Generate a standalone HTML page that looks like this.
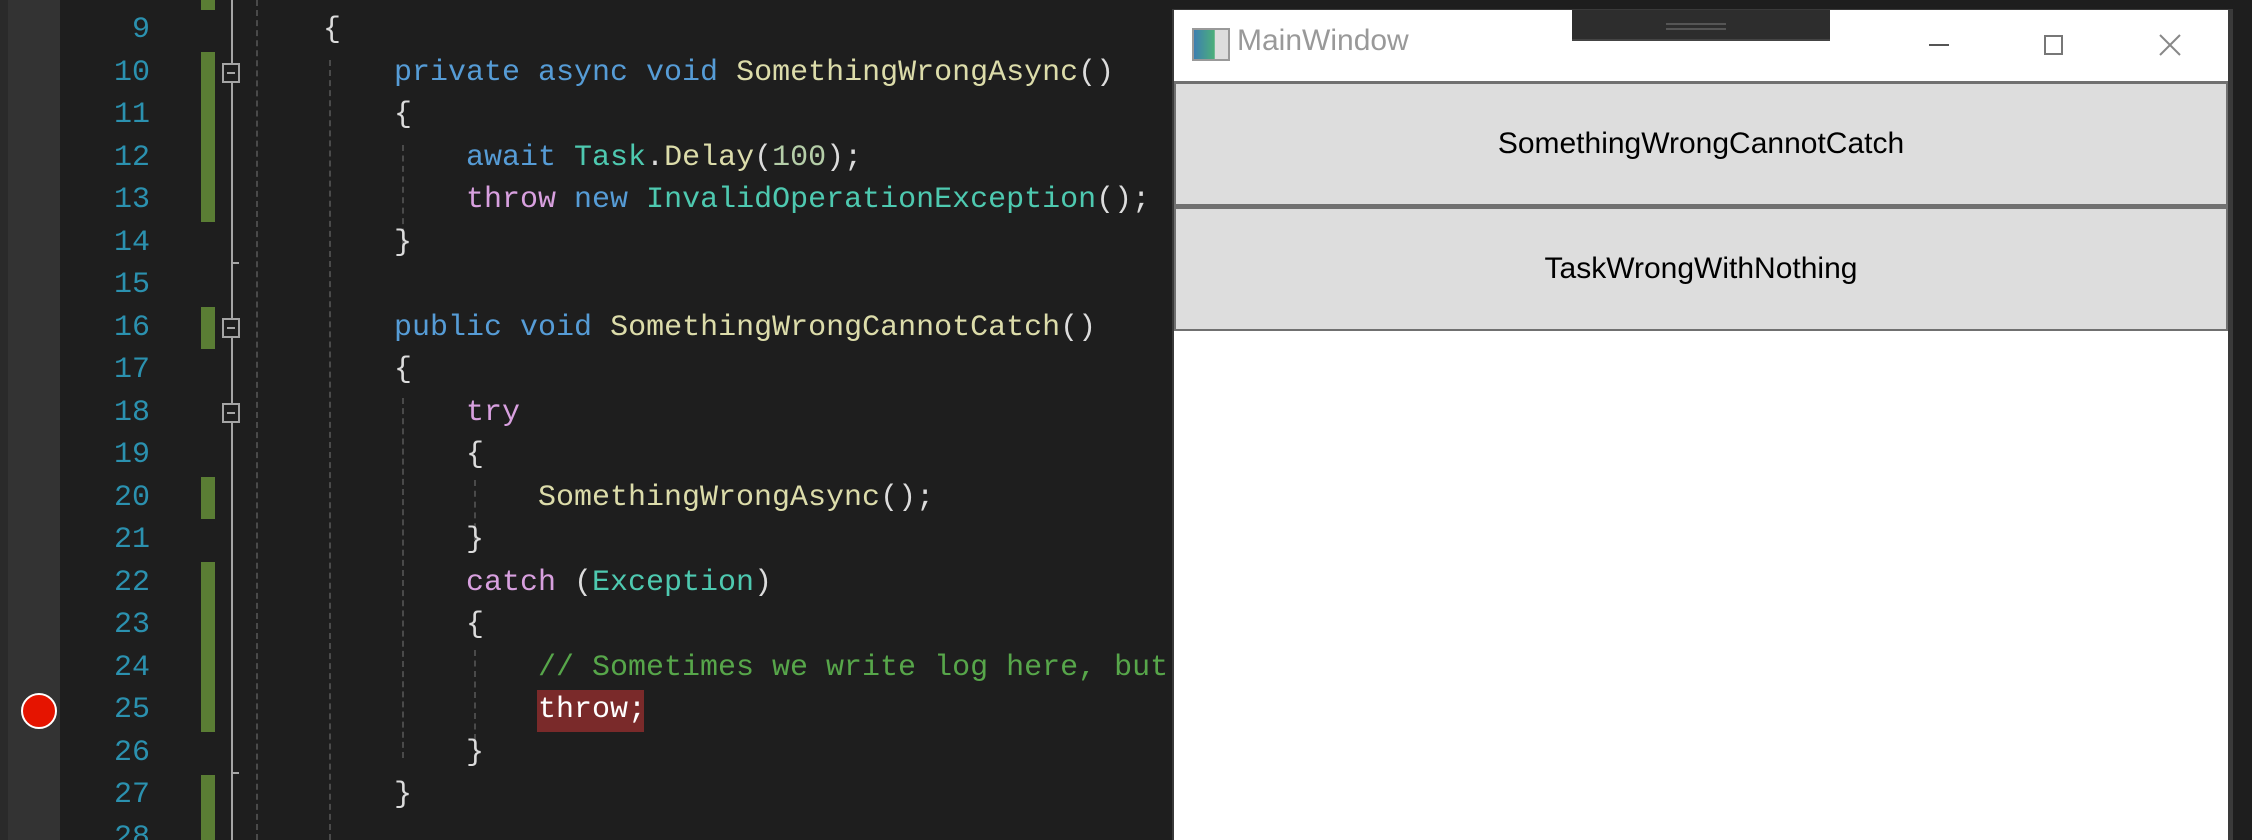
<!DOCTYPE html>
<html style="overflow:hidden;width:2252px;height:840px"><head><meta charset="utf-8"><style>
*{margin:0;padding:0;box-sizing:border-box}
body{width:2252px;height:840px;background:#1e1e1e;position:relative;overflow:hidden;font-family:"Liberation Mono",monospace}
.l{position:absolute;left:0;height:42px;line-height:42px;font-size:30px;white-space:pre;color:#dcdcdc}
.n{position:absolute;width:150px;text-align:right;color:#2b91af;font-size:30px;height:42px;line-height:42px;left:0}
.k{color:#569cd6}.c{color:#d8a0df}.m{color:#dcdcaa}.t{color:#4ec9b0}.nu{color:#b5cea8}.cm{color:#57a64a}
.g{position:absolute;left:201px;width:14px;background:#5a7d34}
.f{position:absolute;left:222px;width:18px;height:20px;border:2px solid #a5a5a5;background:#1e1e1e}
.f:after{content:"";position:absolute;left:3px;top:7px;width:8px;height:2px;background:#a5a5a5}
.d{position:absolute;top:0;height:840px;width:0;border-left:2px dashed #4a4a4a}
</style></head><body>
<div style="position:absolute;left:0;top:0;width:8px;height:840px;background:#2a2a2a"></div>
<div style="position:absolute;left:8px;top:0;width:52px;height:840px;background:#333"></div>
<div style="position:absolute;left:231px;top:0;width:2px;height:840px;background:#a5a5a5"></div>
<div style="position:absolute;left:231px;top:262px;width:8px;height:2px;background:#a5a5a5"></div>
<div style="position:absolute;left:231px;top:772px;width:8px;height:2px;background:#a5a5a5"></div>
<div class="d" style="left:256px"></div>
<div class="d" style="left:329px;top:60px;height:780px"></div>
<div class="d" style="left:402px;top:145px;height:100px"></div>
<div class="d" style="left:402px;top:398px;height:360px"></div>
<div class="d" style="left:474px;top:480px;height:60px"></div>
<div class="d" style="left:474px;top:650px;height:90px"></div>
<div class="g" style="top:0;height:10px"></div>
<div class="g" style="top:52px;height:170px"></div>
<div class="g" style="top:307px;height:42px"></div>
<div class="g" style="top:477px;height:42px"></div>
<div class="g" style="top:562px;height:170px"></div>
<div class="g" style="top:775px;height:65px"></div>
<div class="f" style="top:63px"></div>
<div class="f" style="top:318px"></div>
<div class="f" style="top:403px"></div>
<div style="position:absolute;left:21px;top:693px;width:36px;height:36px;border-radius:50%;background:#e51400;border:2px solid #fff"></div>
<div style="position:absolute;left:537px;top:690px;width:107px;height:42px;background:#7a2a2a"></div>
<div class="l" style="top:-34px;left:323px"><span class="k">public</span> <span class="t">SyncExample</span></div>
<div class="n" style="top:9px">9</div><div class="l" style="top:9px;left:323px">{</div>
<div class="n" style="top:52px">10</div><div class="l" style="top:52px;left:394px"><span class="k">private async void</span> <span class="m">SomethingWrongAsync</span>()</div>
<div class="n" style="top:94px">11</div><div class="l" style="top:94px;left:394px">{</div>
<div class="n" style="top:137px">12</div><div class="l" style="top:137px;left:466px"><span class="k">await</span> <span class="t">Task</span>.<span class="m">Delay</span>(<span class="nu">100</span>);</div>
<div class="n" style="top:179px">13</div><div class="l" style="top:179px;left:466px"><span class="c">throw</span> <span class="k">new</span> <span class="t">InvalidOperationException</span>();</div>
<div class="n" style="top:222px">14</div><div class="l" style="top:222px;left:394px">}</div>
<div class="n" style="top:264px">15</div>
<div class="n" style="top:307px">16</div><div class="l" style="top:307px;left:394px"><span class="k">public void</span> <span class="m">SomethingWrongCannotCatch</span>()</div>
<div class="n" style="top:349px">17</div><div class="l" style="top:349px;left:394px">{</div>
<div class="n" style="top:392px">18</div><div class="l" style="top:392px;left:466px"><span class="c">try</span></div>
<div class="n" style="top:434px">19</div><div class="l" style="top:434px;left:466px">{</div>
<div class="n" style="top:477px">20</div><div class="l" style="top:477px;left:538px"><span class="m">SomethingWrongAsync</span>();</div>
<div class="n" style="top:519px">21</div><div class="l" style="top:519px;left:466px">}</div>
<div class="n" style="top:562px">22</div><div class="l" style="top:562px;left:466px"><span class="c">catch</span> (<span class="t">Exception</span>)</div>
<div class="n" style="top:604px">23</div><div class="l" style="top:604px;left:466px">{</div>
<div class="n" style="top:647px">24</div><div class="l cm" style="top:647px;left:538px">// Sometimes we write log here, but</div>
<div class="n" style="top:689px">25</div><div class="l" style="top:689px;left:538px;color:#fff">throw;</div>
<div class="n" style="top:732px">26</div><div class="l" style="top:732px;left:466px">}</div>
<div class="n" style="top:774px">27</div><div class="l" style="top:774px;left:394px">}</div>
<div class="n" style="top:817px">28</div>

<div style="position:absolute;left:1172px;top:9px;width:1061px;height:831px;background:#3a3a3a"></div>
<div style="position:absolute;left:1174px;top:10px;width:1054px;height:830px;background:#fff;font-family:'Liberation Sans',sans-serif">
  <div style="position:absolute;left:18px;top:18px;width:38px;height:33px;border:2px solid #999;background:linear-gradient(90deg,#3d7fb0,#4caf7a 60%,#ddd 62%)"></div>
  <div style="position:absolute;left:63px;top:14px;font-size:30px;color:#999">MainWindow</div>
  <div style="position:absolute;left:398px;top:0;width:258px;height:31px;background:#2d2d2d;border-bottom:2px solid #444"></div>
  <div style="position:absolute;left:492px;top:13px;width:60px;height:2px;background:#555"></div>
  <div style="position:absolute;left:492px;top:18px;width:60px;height:2px;background:#555"></div>
  <div style="position:absolute;left:755px;top:34px;width:20px;height:2px;background:#555"></div>
  <div style="position:absolute;left:870px;top:25px;width:19px;height:20px;border:2px solid #777"></div>
  <svg style="position:absolute;left:983px;top:23px" width="26" height="24"><path d="M3 2L23 22M23 2L3 22" stroke="#888" stroke-width="2"/></svg>
  <div style="position:absolute;left:0;top:71px;width:1054px;height:125px;background:#ddd;border:2px solid #707070;border-top-width:3px;font-size:30px;text-align:center;line-height:120px;color:#000">SomethingWrongCannotCatch</div>
  <div style="position:absolute;left:0;top:195px;width:1054px;height:126px;background:#ddd;border:2px solid #707070;border-top-width:4px;font-size:30px;text-align:center;line-height:120px;color:#000">TaskWrongWithNothing</div>
</div>
</body></html>
